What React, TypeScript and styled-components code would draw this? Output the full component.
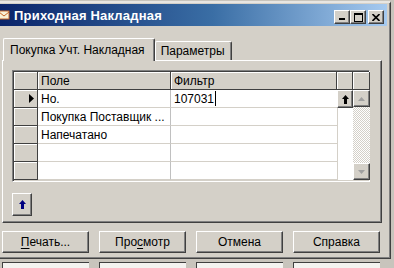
import React from 'react';
import styled, { createGlobalStyle, css } from 'styled-components';

const GlobalStyle = createGlobalStyle`
  html, body {
    margin: 0;
    padding: 0;
  }
  body {
    background: #d4d0c8;
    font-family: "Liberation Sans", Arial, sans-serif;
    font-size: 12px;
    color: #000;
    overflow: hidden;
  }
`;

const raised = css`
  border-style: solid;
  border-width: 1px;
  border-color: #fff #404040 #404040 #fff;
  box-shadow: inset -1px -1px #808080;
`;

const Page = styled.div`
  width: 394px;
  height: 268px;
  padding-top: 1px;
  box-sizing: border-box;
  overflow: hidden;
  background: #c8c4bc;
`;

const Window = styled.div`
  width: 391px;
  height: 258px;
  box-sizing: border-box;
  background: #d4d0c8;
  border-top: 2px solid #e8e6e2;
  border-right: 1px solid #404040;
  border-bottom: 1px solid #404040;
  box-shadow: inset -1px -1px #808080;
  display: flex;
  flex-direction: column;
`;

const TitleBar = styled.div`
  height: 22px;
  margin: 1px 3px 0 0;
  background: linear-gradient(to right, #0a246a 0%, #3a6ea5 55%, #a6caf0 100%);
  display: flex;
  align-items: center;
`;

const TitleText = styled.span`
  color: #fff;
  font-weight: bold;
  font-size: 13px;
  margin-left: 4px;
  letter-spacing: 0.2px;
  flex: 1;
  white-space: nowrap;
`;

const CaptionButtons = styled.div`
  display: flex;
  align-items: center;
  margin-right: 3px;
  margin-top: 4px;
`;

const CaptionButton = styled.div<{ $gap?: number }>`
  width: 16px;
  height: 14px;
  box-sizing: border-box;
  background: #d4d0c8;
  ${raised};
  margin-left: ${(p) => p.$gap ?? 0}px;
  display: flex;
  align-items: center;
  justify-content: center;
`;

const Body = styled.div`
  flex: 1;
  display: flex;
  flex-direction: column;
  padding: 11px 8px 0 2px;
`;

const TabStrip = styled.div`
  display: flex;
  align-items: flex-end;
  height: 23px;
  padding-left: 1px;
  position: relative;
  z-index: 1;
`;

const Tab = styled.div<{ $active?: boolean }>`
  box-sizing: border-box;
  height: ${(p) => (p.$active ? 23 : 19)}px;
  padding: ${(p) => (p.$active ? '3px 9px 0 6px' : '1px 6px 0 5px')};
  margin-bottom: ${(p) => (p.$active ? -1 : 0)}px;
  background: #d4d0c8;
  border-top: 1px solid #fff;
  border-left: 1px solid #fff;
  border-right: 1px solid #404040;
  box-shadow: inset -1px 0 #808080;
  border-radius: 2px 2px 0 0;
  white-space: nowrap;
  font-size: 12px;
  line-height: 16px;
`;

const Panel = styled.div`
  box-sizing: border-box;
  height: 163px;
  border-style: solid;
  border-width: 1px;
  border-color: #fff #404040 #404040 #fff;
  box-shadow: inset -1px -1px #808080;
  padding: 9px 0 0 9px;
  display: flex;
  flex-direction: column;
`;

const Grid = styled.div`
  display: grid;
  grid-template-columns: 24px 133px 166px 16px 17px;
  grid-template-rows: repeat(6, 18px);
  width: 358px;
  box-sizing: border-box;
  border-style: solid;
  border-width: 1px;
  border-color: #808080 #fff #fff #808080;
  box-shadow: inset 1px 1px #404040, inset -1px -1px #d4d0c8;
  padding: 1px;
  background: #fff;
`;

const HeadCell = styled.div`
  box-sizing: border-box;
  background: #d4d0c8;
  border-right: 1px solid #404040;
  border-bottom: 1px solid #404040;
  box-shadow: inset 1px 1px #fff;
  padding: 2px 3px 0;
  line-height: 14px;
  white-space: nowrap;
`;

const RowHead = styled.div`
  box-sizing: border-box;
  background: #d4d0c8;
  border-right: 1px solid #404040;
  border-bottom: 1px solid #404040;
  box-shadow: inset 1px 1px #fff;
  display: flex;
  align-items: center;
  justify-content: flex-end;
  padding-right: 3px;
`;

const Cell = styled.div<{ $divider?: boolean }>`
  box-sizing: border-box;
  border-bottom: 1px solid #d4d0c8;
  border-right: ${(p) => (p.$divider ? '1px solid #c0c0c0' : 'none')};
  padding: 2px 3px 0;
  line-height: 14px;
  white-space: nowrap;
  overflow: hidden;
  display: flex;
`;

const Caret = styled.span`
  display: inline-block;
  width: 1px;
  height: 15px;
  background: #000;
  margin-left: 1px;
  margin-top: -1px;
`;

const ArrowButton = styled.div`
  box-sizing: border-box;
  background: #d4d0c8;
  ${raised};
  display: flex;
  align-items: center;
  justify-content: center;
`;

const EmptyColumn = styled.div`
  grid-column: 4;
  grid-row: 3 / 7;
  background: #fff;
  border-left: 1px solid #d4d0c8;
`;

const ScrollBar = styled.div`
  grid-column: 5;
  grid-row: 2 / 7;
  display: flex;
  flex-direction: column;
  background-color: #eceae6;
  background-image: repeating-conic-gradient(#d4d0c8 0 25%, #fff 0 50%);
  background-size: 2px 2px;
`;

const ScrollArrow = styled(ArrowButton)`
  height: 17px;
`;

const Track = styled.div`
  flex: 1;
`;

const SmallButton = styled(ArrowButton)`
  width: 20px;
  height: 23px;
  margin-top: 11px;
`;

const ButtonRow = styled.div`
  display: flex;
  justify-content: space-between;
  width: 378px;
  margin-top: 8px;
`;

const PushButton = styled.div`
  box-sizing: border-box;
  width: 87px;
  height: 22px;
  background: #d4d0c8;
  ${raised};
  display: flex;
  align-items: center;
  justify-content: center;
  font-size: 12px;
`;

const Under = styled.span`
  text-decoration: underline;
  text-underline-offset: 2px;
`;

const Behind = styled.div`
  display: flex;
  gap: 10px;
  padding: 3px 0 0 2px;
`;

const BehindBox = styled.div`
  width: 86px;
  height: 8px;
  background: #f4f3f0;
  border-top: 1px solid #404040;
  border-left: 1px solid #404040;
`;

const UpArrow = ({ color }: { color: string }) => (
  <svg width="7" height="9" viewBox="0 0 7 9">
    <path d="M3.5 0 L7 4 L5 4 L5 9 L2 9 L2 4 L0 4 Z" fill={color} />
  </svg>
);

const ScrollTriangle = ({ down }: { down?: boolean }) => (
  <svg width="9" height="6" viewBox="0 0 9 6">
    <path d={down ? 'M1 1 L8 1 L4.5 5 Z' : 'M1 5 L8 5 L4.5 1 Z'} fill="#a0a0a0" />
  </svg>
);

const RowPointer = () => (
  <svg width="5" height="9" viewBox="0 0 5 9">
    <path d="M0 0 L5 4.5 L0 9 Z" fill="#000" />
  </svg>
);

const WindowIcon = () => (
  <svg width="10" height="10" viewBox="0 0 10 10">
    <rect x="-1" y="1" width="10" height="8" fill="#f8f0d8" stroke="#c86428" />
    <path d="M-1 2 L4 6 L9 2" fill="none" stroke="#c86428" />
  </svg>
);

const rows = [
  { field: 'Но.', filter: '107031', current: true },
  { field: 'Покупка Поставщик ...', filter: '' },
  { field: 'Напечатано', filter: '' },
  { field: '', filter: '' },
  { field: '', filter: '' },
];

const App = (): JSX.Element => {
  return (
    <>
      <GlobalStyle />
      <Page>
        <Window>
          <TitleBar>
            <WindowIcon />
            <TitleText>Приходная Накладная</TitleText>
            <CaptionButtons>
              <CaptionButton>
                <svg width="8" height="8" viewBox="0 0 8 8">
                  <rect x="1" y="5" width="6" height="2" fill="#000" />
                </svg>
              </CaptionButton>
              <CaptionButton>
                <svg width="9" height="9" viewBox="0 0 9 9">
                  <rect x="0.5" y="0.5" width="8" height="8" fill="none" stroke="#000" />
                  <rect x="0" y="0" width="9" height="2" fill="#000" />
                </svg>
              </CaptionButton>
              <CaptionButton $gap={2}>
                <svg width="8" height="7" viewBox="0 0 8 7">
                  <path d="M0.5 0 L7.5 7 M7.5 0 L0.5 7" stroke="#000" strokeWidth="1.6" />
                </svg>
              </CaptionButton>
            </CaptionButtons>
          </TitleBar>
          <Body>
            <TabStrip>
              <Tab $active>Покупка Учт. Накладная</Tab>
              <Tab>Параметры</Tab>
            </TabStrip>
            <Panel>
              <Grid>
                <HeadCell />
                <HeadCell>Поле</HeadCell>
                <HeadCell>Фильтр</HeadCell>
                <HeadCell />
                <HeadCell />
                {rows.map((r, i) => (
                  <React.Fragment key={i}>
                    <RowHead>{r.current && <RowPointer />}</RowHead>
                    <Cell $divider>{r.field}</Cell>
                    <Cell>
                      {r.filter}
                      {r.current && <Caret />}
                    </Cell>
                    {i === 0 && (
                      <ArrowButton>
                        <UpArrow color="#000" />
                      </ArrowButton>
                    )}
                  </React.Fragment>
                ))}
                <EmptyColumn />
                <ScrollBar>
                  <ScrollArrow>
                    <ScrollTriangle />
                  </ScrollArrow>
                  <Track />
                  <ScrollArrow>
                    <ScrollTriangle down />
                  </ScrollArrow>
                </ScrollBar>
              </Grid>
              <SmallButton>
                <UpArrow color="#000080" />
              </SmallButton>
            </Panel>
            <ButtonRow>
              <PushButton>
                <Under>П</Under>ечать...
              </PushButton>
              <PushButton>
                Про<Under>с</Under>мотр
              </PushButton>
              <PushButton>Отмена</PushButton>
              <PushButton>Справка</PushButton>
            </ButtonRow>
          </Body>
        </Window>
        <Behind>
          <BehindBox />
          <BehindBox />
          <BehindBox />
          <BehindBox />
        </Behind>
      </Page>
    </>
  );
};

export default App;
